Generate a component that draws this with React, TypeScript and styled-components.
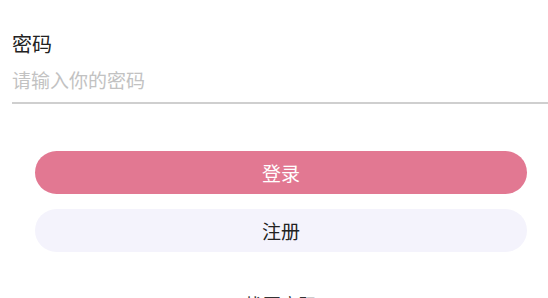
import styled, { createGlobalStyle } from "styled-components";

const GlobalStyle = createGlobalStyle`
  html, body {
    margin: 0;
    padding: 0;
    background: #ffffff;
    overflow: hidden;
  }
  body {
    font-family: "Noto Sans CJK SC", "Noto Sans", sans-serif;
  }
`;

const Page = styled.div`
  width: 548px;
  height: 298px;
  display: flex;
  flex-direction: column;
  overflow: hidden;
  background: #ffffff;
`;

const Field = styled.div`
  display: flex;
  flex-direction: column;
  padding: 30px 0 0 12px;
`;

const Label = styled.div`
  font-size: 20px;
  line-height: 28px;
  color: #222222;
`;

const PasswordInput = styled.input`
  border: none;
  outline: none;
  background: transparent;
  padding: 0;
  margin-top: 8px;
  height: 26px;
  font-family: inherit;
  font-size: 19px;
  color: #333333;
  padding-bottom: 10px;
  border-bottom: 2px solid #cfcfcf;

  &::placeholder {
    color: #c2c2c2;
  }
`;

const Actions = styled.div`
  display: flex;
  flex-direction: column;
  align-items: center;
  gap: 15px;
  padding: 47px 21px 0 35px;
`;

const Button = styled.button<{ $primary?: boolean }>`
  width: 100%;
  height: 43px;
  border: none;
  border-radius: 22px;
  font-family: inherit;
  font-size: 19px;
  background: ${({ $primary }) => ($primary ? "#e27892" : "#f4f3fc")};
  color: ${({ $primary }) => ($primary ? "#ffffff" : "#222222")};
  cursor: pointer;
`;

const LinkText = styled.div`
  margin-top: 24px;
  font-size: 18px;
  color: #333333;
  text-align: center;
`;

export default function App() {
  return (
    <Page>
      <GlobalStyle />
      <Field>
        <Label>密码</Label>
        <PasswordInput type="password" placeholder="请输入你的密码" />
      </Field>
      <Actions>
        <Button $primary>登录</Button>
        <Button>注册</Button>
        <LinkText>找回密码</LinkText>
      </Actions>
    </Page>
  );
}
